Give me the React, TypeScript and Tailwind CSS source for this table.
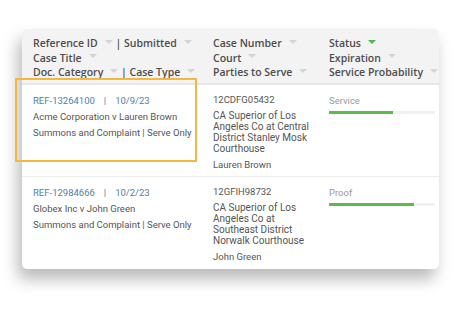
const Caret = ({ green = false }: { green?: boolean }) => (
  <span
    className={`inline-block ml-[7px] mb-[5px] align-middle w-0 h-0 border-l-[4px] border-r-[4px] border-t-[4px] border-l-transparent border-r-transparent ${
      green ? "border-t-[#4cb848]" : "border-t-[#d4d4d4]"
    }`}
  ></span>
);

interface Row {
  ref: string;
  date: string;
  title: string;
  doc: string;
  caseNo: string;
  court: string;
  party: string;
  status: string;
  pct: number;
  highlight?: boolean;
}

const rows: Row[] = [
  {
    ref: "REF-13264100",
    date: "10/9/23",
    title: "Acme Corporation v Lauren Brown",
    doc: "Summons and Complaint | Serve Only",
    caseNo: "12CDFG05432",
    court: "CA Superior of Los Angeles Co at Central District Stanley Mosk Courthouse",
    party: "Lauren Brown",
    status: "Service",
    pct: 60,
    highlight: true,
  },
  {
    ref: "REF-12984666",
    date: "10/2/23",
    title: "Globex Inc v John Green",
    doc: "Summons and Complaint | Serve Only",
    caseNo: "12GFIH98732",
    court: "CA Superior of Los Angeles Co at Southeast District Norwalk Courthouse",
    party: "John Green",
    status: "Proof",
    pct: 80,
  },
];

export default function App() {
  return (
    <div className="w-[458px] h-[311px] bg-white pt-[29px] pl-[22px]">
      <div className="relative w-[417px] h-[240px] bg-white rounded-[5px] shadow-[-4px_10px_16px_rgba(0,0,0,0.28)]">
        {/* header */}
        <div className="flex h-[56px] bg-[#f3f3f4] rounded-t-[5px] border-b-2 border-[#e6e7e9] pt-[7px] font-['Open_Sans',sans-serif] font-semibold text-[10.5px] leading-[14.5px] text-[#4d4d4d]">
          <div className="w-[191px] pl-[11px]">
            <div>
              Reference ID
              <Caret /> | Submitted
              <Caret />
            </div>
            <div>
              Case Title
              <Caret />
            </div>
            <div>
              Doc. Category
              <Caret /> | Case Type
              <Caret />
            </div>
          </div>
          <div className="w-[116px]">
            <div>
              Case Number
              <Caret />
            </div>
            <div>
              Court
              <Caret />
            </div>
            <div>
              Parties to Serve
              <Caret />
            </div>
          </div>
          <div className="flex-1">
            <div>
              Status
              <Caret green />
            </div>
            <div>
              Expiration
              <Caret />
            </div>
            <div>
              Service Probability
              <Caret />
            </div>
          </div>
        </div>

        {/* rows */}
        {rows.map((r, i) => (
          <div
            key={r.ref}
            className={`relative flex font-['Roboto',sans-serif] text-[9.5px] text-[#555] ${
              i === 0 ? "h-[92px] border-b border-[#ececec] pt-[8px]" : "h-[90px] pt-[8px]"
            }`}
          >
            <div className="w-[191px] pl-[11px] leading-[16px]">
              <div className="text-[#4f7fa8]">
                {r.ref}
                <span className="mx-[9px]">|</span>
                {r.date}
              </div>
              <div>{r.title}</div>
              <div>{r.doc}</div>
            </div>
            <div className="w-[116px]">
              <div className="leading-[14px]">{r.caseNo}</div>
              <div className="w-[97px] text-[10px] leading-[11px] mt-[3px]">{r.court}</div>
              <div className="leading-[14px] mt-[4px]">{r.party}</div>
            </div>
            <div className="flex-1 pr-[4px]">
              <div className="text-[9.5px] text-[#9a9a9a] leading-[14px] pt-[1px]">{r.status}</div>
              <div className="mt-[3px] h-[3px] w-[106px] bg-[#f1f1f1]">
                <div className="h-full bg-[#5bbd47]" style={{ width: `${r.pct}%` }}></div>
              </div>
            </div>
            {r.highlight && (
              <div className="absolute left-[-7px] top-[-7px] w-[182px] h-[84px] border-2 border-[#f6b73c] pointer-events-none"></div>
            )}
          </div>
        ))}
      </div>
    </div>
  );
}
